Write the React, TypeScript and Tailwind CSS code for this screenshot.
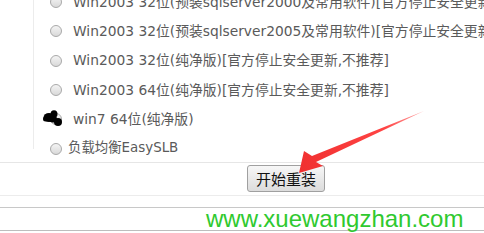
import React from "react";

const font = { fontFamily: '"DejaVu Sans", "Noto Sans CJK SC", sans-serif' };

function Radio() {
  return (
    <span className="inline-block w-[12px] h-[12px] shrink-0 rounded-full border border-[#a9a9a9] bg-gradient-to-b from-[#f4f4f4] to-[#d9d9d9]" />
  );
}

const rows = [
  "Win2003 32位(预装sqlserver2000及常用软件)[官方停止安全更新,不推荐]",
  "Win2003 32位(预装sqlserver2005及常用软件)[官方停止安全更新,不推荐]",
  "Win2003 32位(纯净版)[官方停止安全更新,不推荐]",
  "Win2003 64位(纯净版)[官方停止安全更新,不推荐]",
  "win7 64位(纯净版)",
];

export default function App() {
  return (
    <div className="relative w-[484px] h-[233px] overflow-hidden bg-white" style={font}>
      <div className="h-[163px] border-b border-[#e6e6e6] overflow-hidden">
        <div className="ml-[33px] h-full border-l border-[#ececec]">
          <div className="mt-[-12.6px] pl-[16px]">
            {rows.map((t, i) => (
              <div key={i} className="h-[29.3px] flex items-center whitespace-nowrap text-[13.8px] text-[#5a5a5a]">
                <Radio />
                <span className="ml-[11px]">{t}</span>
              </div>
            ))}
            <div className="h-[29.3px] flex items-center whitespace-nowrap text-[13.4px] text-[#5a5a5a]">
              <Radio />
              <span className="ml-[6px]">负载均衡EasySLB</span>
            </div>
          </div>
        </div>
      </div>
      <div className="h-[33px] border-b border-[#ececec] flex items-start pt-[2px]">
        <button
          className="ml-[247px] w-[78px] h-[27px] rounded-[3px] border border-[#a0a0a0] bg-gradient-to-b from-[#f7f7f7] to-[#dcdcdc] text-[15px] text-[#111] leading-none flex items-center justify-center"
          style={{ fontFamily: '"Noto Sans CJK SC", sans-serif' }}
        >
          开始重装
        </button>
      </div>
      <div className="h-[12px] border-b border-[#c8c8c8]" />
      <div className="h-[23px] border-b border-[#bdbdbd] flex items-end">
        <span
          className="ml-[206px] text-[24px] leading-[24px] text-[#2fc92f] whitespace-nowrap mb-[-1px]"
          style={{ fontFamily: '"Liberation Sans", Arial, sans-serif' }}
        >
          www.xuewangzhan.com
        </span>
      </div>

      {/* cursor blob */}
      <svg className="absolute left-[43px] top-[109px]" width="20" height="19" viewBox="0 0 20 19">
        <ellipse cx="6" cy="8.5" rx="5.5" ry="4.5" fill="#000" />
        <ellipse cx="11" cy="5" rx="3.5" ry="3.8" fill="#000" />
        <ellipse cx="15" cy="13" rx="4" ry="4" fill="#000" />
        <ellipse cx="10" cy="10" rx="4" ry="3.5" fill="#000" />
        <ellipse cx="2.5" cy="10" rx="2.5" ry="2.5" fill="#000" />
      </svg>

      {/* red arrow */}
      <svg className="absolute left-0 top-0 pointer-events-none" width="484" height="233">
        <defs>
          <linearGradient id="ag" x1="424" y1="111" x2="300" y2="173" gradientUnits="userSpaceOnUse">
            <stop offset="0" stopColor="#ff6a6a" stopOpacity="0.6" />
            <stop offset="0.3" stopColor="#f44" />
            <stop offset="1" stopColor="#f03030" />
          </linearGradient>
        </defs>
        <polygon
          points="299,173 304,151 312,156 424,111 316,162 323,166"
          fill="url(#ag)"
        />
      </svg>
    </div>
  );
}
